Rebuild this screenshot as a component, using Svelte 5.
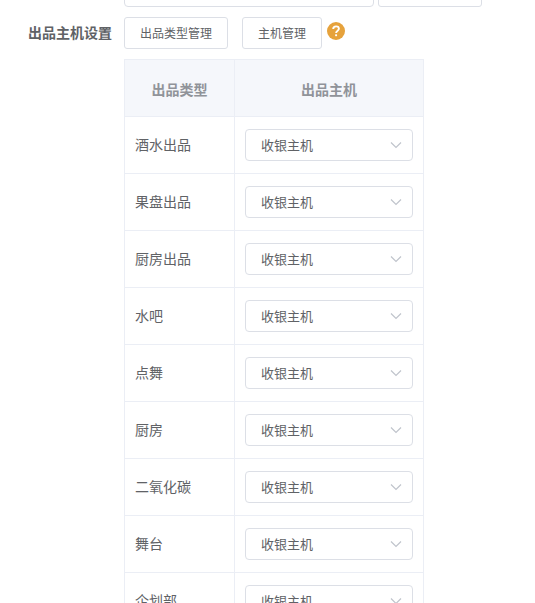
<script lang="ts">
  interface OutputType {
    name: string;
    host: string;
  }

  let rows: OutputType[] = [
    { name: "酒水出品", host: "收银主机" },
    { name: "果盘出品", host: "收银主机" },
    { name: "厨房出品", host: "收银主机" },
    { name: "水吧", host: "收银主机" },
    { name: "点舞", host: "收银主机" },
    { name: "厨房", host: "收银主机" },
    { name: "二氧化碳", host: "收银主机" },
    { name: "舞台", host: "收银主机" },
    { name: "企划部", host: "收银主机" },
  ];
</script>

<div class="page">
  <!-- Bottom of the previous form row -->
  <div class="form-item previous">
    <div class="input wide"></div>
    <div class="input"></div>
  </div>

  <div class="form-item">
    <div class="label">出品主机设置</div>
    <div class="content">
      <div class="toolbar">
        <button class="type-button">出品类型管理</button>
        <button class="host-button">主机管理</button>
        <svg class="help" viewBox="0 0 18 18">
          <circle cx="9" cy="9" r="9" />
          <path d="M6.2 7.1C6.2 5.3 7.4 4.4 9.1 4.4s2.8 1 2.8 2.4c0 1.9-2.8 1.9-2.8 4.2" />
          <rect x="8.1" y="12.2" width="2" height="2" rx="0.6" />
        </svg>
      </div>

      <div class="table">
        <div class="row header">
          <div class="cell">出品类型</div>
          <div class="cell">出品主机</div>
        </div>
        {#each rows as row}
          <div class="row">
            <div class="cell name">{row.name}</div>
            <div class="cell">
              <div class="select">
                <span>{row.host}</span>
                <svg class="arrow" viewBox="0 0 12 8">
                  <path d="M1 1.5 6 6.5 11 1.5" />
                </svg>
              </div>
            </div>
          </div>
        {/each}
      </div>
    </div>
  </div>
</div>

<style>
  :global(body) {
    background: #fff;
  }

  .page {
    height: 603px;
    overflow: hidden;
    font-family: "Noto Sans CJK SC", sans-serif;
    font-size: 14px;
    color: #606266;
  }

  .form-item {
    display: flex;
  }

  .previous {
    height: 7px;
    margin-bottom: 10px;
    padding-left: 124px;
    gap: 4px;
    align-items: flex-end;
  }

  .input {
    box-sizing: border-box;
    width: 104px;
    height: 32px;
    border: 1px solid #dcdfe6;
    border-radius: 3px;
  }

  .input.wide {
    width: 250px;
    border-radius: 4px;
  }

  .label {
    box-sizing: border-box;
    width: 124px;
    padding-right: 12px;
    line-height: 30px;
    text-align: right;
    font-weight: 700;
    white-space: nowrap;
  }

  .toolbar {
    display: flex;
    height: 32px;
    margin-bottom: 10px;
  }

  button {
    box-sizing: border-box;
    height: 32px;
    padding: 0;
    border: 1px solid #dcdfe6;
    border-radius: 3px;
    background: #fff;
    color: #606266;
    font-family: inherit;
    font-size: 12px;
    line-height: 30px;
  }

  .type-button {
    width: 104px;
    margin-right: 14px;
  }

  .host-button {
    width: 80px;
    margin-right: 5px;
  }

  .help {
    width: 18px;
    height: 18px;
    margin-top: 5px;
  }

  .help circle {
    fill: #e6a23c;
  }

  .help path {
    fill: none;
    stroke: #fff;
    stroke-width: 1.9;
  }

  .help rect {
    fill: #fff;
  }

  .table {
    width: 299px;
    border-top: 1px solid #ebeef5;
    border-left: 1px solid #ebeef5;
  }

  .row {
    display: grid;
    grid-template-columns: 110px 189px;
    height: 57px;
  }

  .cell {
    display: flex;
    align-items: center;
    padding: 0 10px;
    border-right: 1px solid #ebeef5;
    border-bottom: 1px solid #ebeef5;
  }

  .cell.name {
    padding-bottom: 2px;
  }

  .header .cell {
    justify-content: center;
    padding-top: 1px;
    background: #f5f7fb;
    color: #909399;
    font-weight: 700;
  }

  .select {
    box-sizing: border-box;
    display: flex;
    align-items: center;
    justify-content: space-between;
    width: 168px;
    height: 32px;
    padding: 0 10px 0 15px;
    border: 1px solid #dcdfe6;
    border-radius: 4px;
    font-size: 13px;
  }

  .select span {
    padding-bottom: 2px;
  }

  .arrow {
    width: 12px;
    height: 8px;
  }

  .arrow path {
    fill: none;
    stroke: #c0c4cc;
    stroke-width: 1.2;
  }
</style>
